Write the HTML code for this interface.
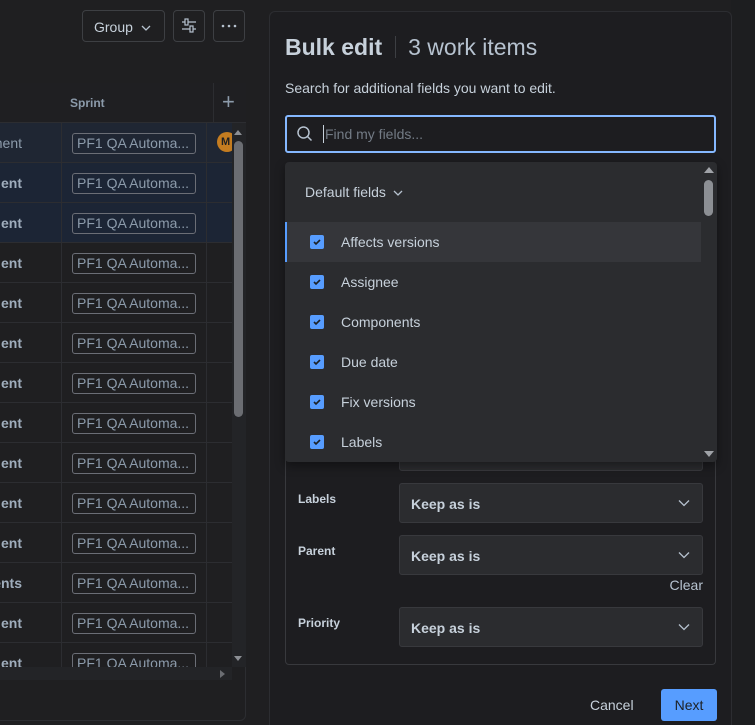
<!DOCTYPE html>
<html style="height:725px;overflow:hidden"><head><meta charset="utf-8"><style>
*{box-sizing:border-box;margin:0;padding:0}
body{width:755px;height:725px;overflow:hidden;background:#1f1f21;font-family:"Liberation Sans",sans-serif;color:#b6c2cf;position:relative}
.a{position:absolute}
.btn{border:1px solid #3d3f43;border-radius:4px;height:32px;top:10px}
.row{position:absolute;left:0;width:232px;height:40px;border-bottom:1px solid #2c2d31}
.row .t{position:absolute;right:210px;top:12px;font-size:14px;font-weight:bold;color:#9fadbc;white-space:nowrap}
.tag{position:absolute;left:72px;top:10px;width:124px;height:21px;border:1px solid #6b6e76;border-radius:3px;font-size:14px;color:#8c9bab;padding-left:4px;line-height:19px;white-space:nowrap;overflow:hidden}
.item{position:absolute;left:0;width:416px;height:40px}
.cb{position:absolute;left:25px;top:13px;width:14px;height:14px;background:#579dff;border-radius:2px}
.cb svg{position:absolute;left:2px;top:2px}
.item span{position:absolute;left:56px;top:12px;font-size:14px;color:#c7d1db}
.lab{position:absolute;left:298px;font-size:12px;font-weight:bold;color:#c7d1db}
.sel{position:absolute;left:399px;width:304px;height:40px;background:#2b2c2f;border:1px solid #38393d;border-radius:3px;font-size:14px;font-weight:bold;color:#c7d1db;padding:12px 0 0 11px}
.sel svg{position:absolute;right:12px;top:15px}
</style></head><body>
<div class="a btn" style="left:82px;width:83px;font-size:14px;color:#c7d1db;padding:8px 0 0 11px">Group <svg width="10" height="8" style="margin-left:4px" viewBox="0 0 10 8"><path d="M1 2l4 4 4-4" stroke="#b6c2cf" fill="none" stroke-width="1.3"/></svg></div>
<div class="a btn" style="left:173px;width:32px"><svg width="30" height="30" viewBox="0 0 30 30"><path d="M8 11h14M8 18h14" stroke="#b6c2cf" stroke-width="1.3"/><rect x="11" y="8" width="3" height="6" fill="#1f1f21" stroke="#b6c2cf" stroke-width="1.2"/><rect x="16" y="15" width="3" height="6" fill="#1f1f21" stroke="#b6c2cf" stroke-width="1.2"/></svg></div>
<div class="a btn" style="left:213px;width:32px"><svg width="30" height="30" viewBox="0 0 30 30"><circle cx="9" cy="15" r="1.3" fill="#b6c2cf"/><circle cx="15" cy="15" r="1.3" fill="#b6c2cf"/><circle cx="21" cy="15" r="1.3" fill="#b6c2cf"/></svg></div>
<div class="a" style="left:-5px;top:83px;width:251px;height:638px;border:1px solid #2c2d31;border-radius:6px;background:#1f1f21;overflow:hidden"></div>
<div class="a" style="left:0;top:83px;width:246px;height:40px;background:#1f1f22;border-bottom:1px solid #2c2d31"></div>
<div class="a" style="left:70px;top:96px;font-size:12px;font-weight:bold;color:#8c9bab">Sprint</div>
<div class="a" style="left:213px;top:83px;width:1px;height:40px;background:#2c2d31"></div>
<div class="a" style="left:222px;top:92px;font-size:22px;color:#8c9bab;line-height:20px">+</div>
<div class="a" style="left:0;top:123px;width:232px;height:544px;overflow:hidden">
<div class="row" style="top:0;background:#1f2633"><div class="t" style="font-weight:normal;color:#8c9bab">mment</div><div class="tag">PF1 QA Automa...</div><div class="a" style="left:217px;top:9px;width:20px;height:20px;border-radius:50%;background:#c47c20;font-size:11px;color:#1f1f21;padding:4px 0 0 4px;font-weight:bold">M</div></div>
<div class="row" style="top:40px;background:#1c2535"><div class="t">ent</div><div class="tag">PF1 QA Automa...</div></div>
<div class="row" style="top:80px;background:#1c2535"><div class="t">ent</div><div class="tag">PF1 QA Automa...</div></div>
<div class="row" style="top:120px"><div class="t">ent</div><div class="tag">PF1 QA Automa...</div></div>
<div class="row" style="top:160px"><div class="t">ent</div><div class="tag">PF1 QA Automa...</div></div>
<div class="row" style="top:200px"><div class="t">ent</div><div class="tag">PF1 QA Automa...</div></div>
<div class="row" style="top:240px"><div class="t">ent</div><div class="tag">PF1 QA Automa...</div></div>
<div class="row" style="top:280px"><div class="t">ent</div><div class="tag">PF1 QA Automa...</div></div>
<div class="row" style="top:320px"><div class="t">ent</div><div class="tag">PF1 QA Automa...</div></div>
<div class="row" style="top:360px"><div class="t">ent</div><div class="tag">PF1 QA Automa...</div></div>
<div class="row" style="top:400px"><div class="t">ent</div><div class="tag">PF1 QA Automa...</div></div>
<div class="row" style="top:440px"><div class="t">nents</div><div class="tag">PF1 QA Automa...</div></div>
<div class="row" style="top:480px"><div class="t">ent</div><div class="tag">PF1 QA Automa...</div></div>
<div class="row" style="top:520px"><div class="t">ent</div><div class="tag">PF1 QA Automa...</div></div>
<div class="a" style="left:61px;top:0;width:1px;height:544px;background:#2c2d31"></div>
<div class="a" style="left:206px;top:0;width:1px;height:544px;background:#2c2d31"></div>
</div>
<div class="a" style="left:232px;top:123px;width:14px;height:544px;background:#232427"></div>
<div class="a" style="left:234px;top:141px;width:9px;height:276px;background:#6b6d72;border-radius:5px"></div>
<div class="a" style="left:234px;top:130px;width:0;height:0;border:4px solid transparent;border-bottom:5px solid #8c8f94;border-top:0"></div>
<div class="a" style="left:234px;top:656px;width:0;height:0;border:4px solid transparent;border-top:5px solid #8c8f94;border-bottom:0"></div>
<div class="a" style="left:0;top:667px;width:232px;height:13px;background:#232427"></div>
<div class="a" style="left:220px;top:670px;border:4px solid transparent;border-left:5px solid #6b6d72;border-right:0"></div>
<div class="a" style="left:731px;top:0;width:24px;height:725px;background:#1d1e20"></div>
<div class="a" style="left:269px;top:11px;width:463px;height:714px;background:#1d1d20;border:1px solid #2c2d31;border-bottom:0;border-radius:6px 6px 0 0"></div>
<div class="a" style="left:285px;top:34px;font-size:23px;color:#c7d1db;white-space:nowrap"><b>Bulk edit</b><span style="display:inline-block;width:1px;height:22px;background:#3d3f43;margin:0 12px -3px 13px"></span><span style="color:#b6c2cf">3 work items</span></div>
<div class="a" style="left:285px;top:80px;font-size:14px;color:#c7d1db">Search for additional fields you want to edit.</div>
<div class="a" style="left:285px;top:115px;width:431px;height:38px;border:2px solid #85b8ff;border-radius:3px;background:#1d1d20"></div>
<svg class="a" style="left:296px;top:125px" width="18" height="18" viewBox="0 0 18 18"><circle cx="7.5" cy="7.5" r="5.5" stroke="#b6c2cf" stroke-width="1.5" fill="none"/><path d="M11.5 11.5l4 4" stroke="#b6c2cf" stroke-width="1.5"/></svg>
<div class="a" style="left:323px;top:125px;width:1px;height:18px;background:#c7d1db"></div>
<div class="a" style="left:325px;top:126px;font-size:14px;color:#737b85">Find my fields...</div>
<div class="a" style="left:285px;top:440px;width:431px;height:225px;border:1px solid #38393d;border-top:0;border-radius:0 0 4px 4px"></div>
<div class="sel" style="top:431px;height:40px"></div>
<div class="lab" style="top:492px">Labels</div>
<div class="sel" style="top:483px">Keep as is<svg width="12" height="8" viewBox="0 0 12 8"><path d="M1 1.5l5 5 5-5" stroke="#b6c2cf" fill="none" stroke-width="1.3"/></svg></div>
<div class="lab" style="top:544px">Parent</div>
<div class="sel" style="top:535px">Keep as is<svg width="12" height="8" viewBox="0 0 12 8"><path d="M1 1.5l5 5 5-5" stroke="#b6c2cf" fill="none" stroke-width="1.3"/></svg></div>
<div class="a" style="right:52px;top:577px;font-size:14px;color:#b6c2cf">Clear</div>
<div class="lab" style="top:616px">Priority</div>
<div class="sel" style="top:607px">Keep as is<svg width="12" height="8" viewBox="0 0 12 8"><path d="M1 1.5l5 5 5-5" stroke="#b6c2cf" fill="none" stroke-width="1.3"/></svg></div>
<div class="a" style="left:590px;top:697px;font-size:14px;color:#c7d1db">Cancel</div>
<div class="a" style="left:661px;top:689px;width:56px;height:32px;background:#579dff;border-radius:3px;font-size:14px;color:#1d2125;text-align:center;line-height:32px">Next</div>
<div class="a" style="left:285px;top:162px;width:432px;height:300px;background:#2b2c2f;border-radius:4px;box-shadow:0 4px 10px rgba(0,0,0,.4);overflow:hidden">
<div class="a" style="left:20px;top:22px;font-size:14px;color:#c7d1db">Default fields <svg width="10" height="8" style="margin-left:3px" viewBox="0 0 10 8"><path d="M1 2l4 4 4-4" stroke="#b6c2cf" fill="none" stroke-width="1.3"/></svg></div>
<div class="item" style="top:60px;background:#35363a;border-left:2px solid #579dff"><div class="cb" style="left:23px"><svg width="10" height="10" viewBox="0 0 10 10"><path d="M2 5l2 2 4-4" stroke="#1d2125" stroke-width="1.6" fill="none"/></svg></div><span style="left:54px">Affects versions</span></div>
<div class="item" style="top:100px"><div class="cb"><svg width="10" height="10" viewBox="0 0 10 10"><path d="M2 5l2 2 4-4" stroke="#1d2125" stroke-width="1.6" fill="none"/></svg></div><span>Assignee</span></div>
<div class="item" style="top:140px"><div class="cb"><svg width="10" height="10" viewBox="0 0 10 10"><path d="M2 5l2 2 4-4" stroke="#1d2125" stroke-width="1.6" fill="none"/></svg></div><span>Components</span></div>
<div class="item" style="top:180px"><div class="cb"><svg width="10" height="10" viewBox="0 0 10 10"><path d="M2 5l2 2 4-4" stroke="#1d2125" stroke-width="1.6" fill="none"/></svg></div><span>Due date</span></div>
<div class="item" style="top:220px"><div class="cb"><svg width="10" height="10" viewBox="0 0 10 10"><path d="M2 5l2 2 4-4" stroke="#1d2125" stroke-width="1.6" fill="none"/></svg></div><span>Fix versions</span></div>
<div class="item" style="top:260px"><div class="cb"><svg width="10" height="10" viewBox="0 0 10 10"><path d="M2 5l2 2 4-4" stroke="#1d2125" stroke-width="1.6" fill="none"/></svg></div><span>Labels</span></div>
<div class="a" style="left:419px;top:5px;border:5px solid transparent;border-bottom:6px solid #a0a3a8;border-top:0"></div>
<div class="a" style="left:419px;top:18px;width:9px;height:36px;background:#8c8f94;border-radius:5px"></div>
<div class="a" style="left:419px;top:289px;border:5px solid transparent;border-top:6px solid #a0a3a8;border-bottom:0"></div>
</div>
</body></html>
